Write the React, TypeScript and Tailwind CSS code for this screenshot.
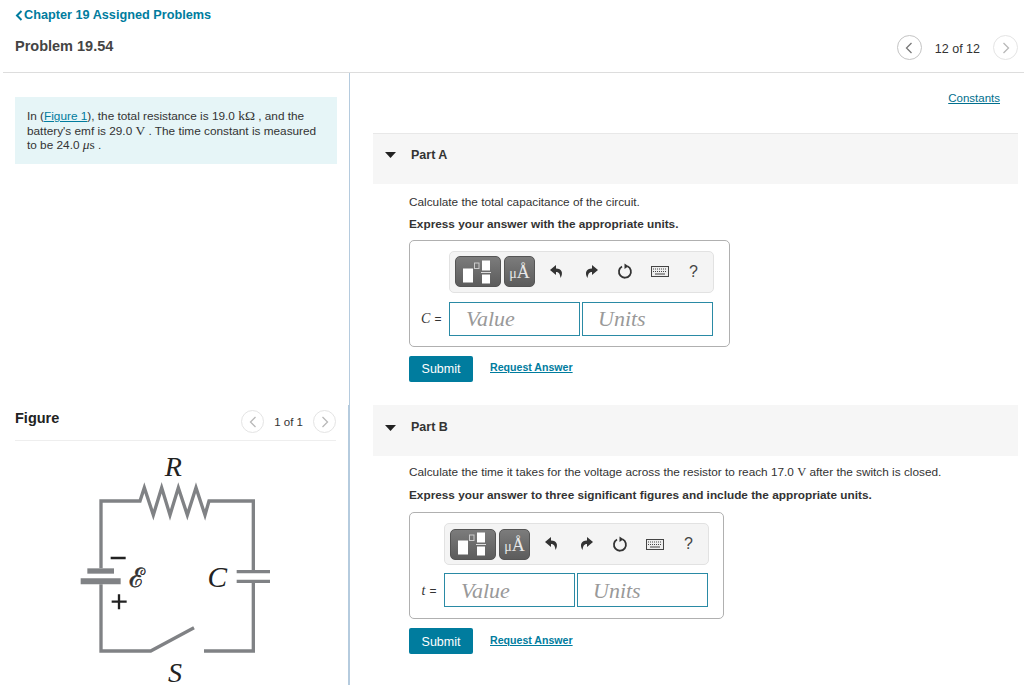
import { ReactNode } from "react";

const serif = "font-['Liberation_Serif',serif]";

function Pager({ label, small }: { label: string; small?: boolean }) {
    const size = small ? "h-[23px] w-[23px]" : "h-[25px] w-[25px]";
    const ring = small ? "border-[#e4e4e4]" : "border-[#c4c4c4]";
    const stroke = small ? "#b8b8b8" : "#777";
    return (
        <div className={small ? "flex items-center gap-[10px]" : "flex items-center gap-[13px]"}>
            <div className={`flex items-center justify-center rounded-full border ${size} ${ring}`}>
                <svg width="8" height="12" viewBox="0 0 8 12" fill="none"><path d="M6.5 1 1.5 6l5 5" stroke={stroke} strokeWidth="1.3" /></svg>
            </div>
            <span className={small ? "pt-[3px] text-[11.5px] text-[#333]" : "pt-[3px] text-[12.5px] text-[#333]"}>{label}</span>
            <div className={`flex items-center justify-center rounded-full border border-[#e4e4e4] ${size}`}>
                <svg width="8" height="12" viewBox="0 0 8 12" fill="none"><path d="M1.5 1l5 5-5 5" stroke="#b8b8b8" strokeWidth="1.3" /></svg>
            </div>
        </div>
    );
}

function Toolbar() {
    return (
        <div className="flex h-[42px] w-[265px] items-center rounded-[5px] border border-[#e2e2e2] bg-[#f4f4f4] pl-[5px]">
            <div className="flex h-[31px] w-[46px] items-center justify-center rounded-[5px] border border-[#555] bg-linear-to-b from-[#7c7c7c] to-[#5c5c5c]">
                <svg width="36" height="24" viewBox="0 0 36 24">
                    <rect x="3" y="8.5" width="10" height="14" fill="#fff" />
                    <rect x="14.5" y="3" width="4.5" height="5.5" fill="none" stroke="#ccc" />
                    <rect x="22" y="0.5" width="8" height="10" fill="#fff" />
                    <rect x="21" y="12" width="10" height="1" fill="#ddd" />
                    <rect x="22" y="14.5" width="8" height="9" fill="#fff" />
                </svg>
            </div>
            <div className={`ml-[3px] flex h-[31px] w-[31px] items-baseline justify-center rounded-[5px] border border-[#555] bg-linear-to-b from-[#7c7c7c] to-[#5c5c5c] pt-[5px] text-[#e8e8e8] ${serif}`}>
                <span className="text-[14px]">μ</span>
                <span className="text-[18px] leading-[20px]">Å</span>
            </div>
            <svg className="ml-[15px]" width="14" height="14" viewBox="0 0 14 14"><path d="M6 0 0 5l6 5V7c2.5 0 4 1.5 4.500 6 3-5 1.500-9.500-4.500-9.500z" fill="#333" /></svg>
            <svg className="ml-[20px]" width="14" height="14" viewBox="0 0 14 14"><path d="M8 0l6 5-6 5V7c-2.500 0-4 1.500-4.500 6-3-5-1.500-9.500 4.500-9.500z" fill="#333" /></svg>
            <svg className="ml-[19px]" width="16" height="17" viewBox="0 0 16 17" fill="none">
                <path d="M10.500 3.300A6 6 0 1 1 5 3.500" stroke="#333" strokeWidth="1.800" />
                <path d="M7.500 0.500 11.500 3.300 7.500 6z" fill="#333" />
            </svg>
            <svg className="ml-[18px]" width="18" height="11" viewBox="0 0 18 11">
                <rect x=".5" y=".5" width="17" height="10" fill="#eee" stroke="#444" />
                <path d="M2 3h14M2 5.500h14" stroke="#444" strokeWidth="1" strokeDasharray="1 1" />
                <path d="M4 8h10" stroke="#444" />
            </svg>
            <span className="ml-[20px] text-[16px] text-[#444]">?</span>
        </div>
    );
}

function AnswerBox({ symbol, width, shift, rowGap }: { symbol: string; width: string; shift: string; rowGap: string }) {
    return (
        <div className={`h-[107px] ${width} rounded-[5px] border border-[#b0b0b0] pt-[10px]`}>
            <div className={shift}>
                <Toolbar />
            </div>
            <div className={`relative flex items-center ${rowGap} ${shift}`}>
                <span className="absolute right-full mr-[7px] whitespace-nowrap text-[12px] tracking-[0.4px] text-[#333]">
                    <i className={`${serif} text-[14px]`}>{symbol}</i> =
                </span>
                <div className={`flex h-[34px] w-[131px] items-center border border-[#2a8aa5] pl-[16px] text-[22px] italic text-[#999] ${serif}`}>Value</div>
                <div className={`ml-[2px] flex h-[34px] w-[131px] items-center border border-[#2a8aa5] pl-[15px] text-[22px] italic text-[#999] ${serif}`}>Units</div>
            </div>
        </div>
    );
}

function Part({ title, className, headClass, children }: { title: string; className?: string; headClass: string; children: ReactNode }) {
    return (
        <section className={className}>
            <div className={`flex items-center bg-[#f6f6f6] pl-[12px] ${headClass}`}>
                <svg width="11" height="6" viewBox="0 0 11 6"><path d="M0 0h11L5.500 6z" fill="#222" /></svg>
                <span className="ml-[15px] text-[12.5px] font-bold text-[#333]">{title}</span>
            </div>
            <div className="pl-[36px]">{children}</div>
        </section>
    );
}

function Actions() {
    return (
        <div className="mt-[9px] flex items-center">
            <button className="h-[26px] w-[64px] rounded-[2px] bg-[#007c9e] pt-[1px] text-[12.5px] text-white">Submit</button>
            <a className="mb-[1px] ml-[17px] text-[10.6px] font-bold text-[#007c9e] underline">Request Answer</a>
        </div>
    );
}

function Circuit() {
    const wire = { stroke: "#808285", strokeWidth: 10, fill: "none" };
    return (
        <svg className="ml-[45px] block" width="230" height="245" viewBox="0 0 690 735">
            <path d="M123 382V180H240L253 140 280 222 305 140 330 222 355 140 382 222 408 140 435 222 447 180H580V392" {...wire} />
            <path d="M123 430V630H272L402 560M432 630H580V421" {...wire} />
            <path d="M82 390h80" stroke="#808285" strokeWidth="16" />
            <path d="M62 421h120" stroke="#808285" strokeWidth="18" />
            <path d="M530 392h100M530 421h100" stroke="#808285" strokeWidth="10" />
            <path d="M152 351h45M155 482h45M177 460v45" stroke="#222" strokeWidth="7" />
            <text x="340" y="104" textAnchor="middle" fontFamily="Liberation Serif" fontStyle="italic" fontSize="84" fill="#222">R</text>
            <text x="472" y="438" textAnchor="middle" fontFamily="Liberation Serif" fontStyle="italic" fontSize="88" fill="#222">C</text>
            <text x="345" y="722" textAnchor="middle" fontFamily="Liberation Serif" fontStyle="italic" fontSize="84" fill="#222">S</text>
            <text x="230" y="438" textAnchor="middle" fontFamily="DejaVu Serif" fontSize="80" fill="#333" stroke="#333" strokeWidth="1.5">ℰ</text>
        </svg>
    );
}

export default function App() {
    return (
        <div className="h-[685px] w-[1024px] overflow-hidden bg-white font-['Liberation_Sans',sans-serif]">
            <header className="ml-[3px] flex h-[73px] items-start justify-between border-b border-[#dddddd] pl-[12px] pr-[6px]">
                <div>
                    <a className="mt-[6px] flex items-center text-[12.7px] font-bold text-[#007c9e]">
                        <svg className="mr-[1px]" width="8" height="11" viewBox="0 0 8 11" fill="none"><path d="M6.500 1 2 5.500 6.500 10" stroke="#007c9e" strokeWidth="2" /></svg>
                        Chapter 19 Assigned Problems
                    </a>
                    <h1 className="mt-[11px] text-[14.5px] font-bold text-[#444]">Problem 19.54</h1>
                </div>
                <div className="mt-[35px]">
                    <Pager label="12 of 12" />
                </div>
            </header>

            <div className="flex h-[612px]">
                <aside className="w-[350px] shrink-0">
                    <div className="h-[332px] border-r border-[#b5cbde] pl-[15px] pr-[12px] pt-[24px]">
                        <div className="h-[67px] w-[322px] bg-[#e6f5f7] px-[12px] pt-[12px] text-[11.8px] leading-[14.5px] text-[#333]">
                            In (<a className="text-[#007c9e] underline">Figure 1</a>), the total resistance is 19.0 <span className={`${serif} text-[13.5px]`}>kΩ</span> , and the battery's emf is 29.0 <span className={`${serif} text-[13.5px]`}>V</span> . The time constant is measured to be 24.0 <span className={`${serif} text-[13.5px]`}><i>μ</i>s</span> .
                        </div>
                    </div>
                    <div className="h-[280px] border-r-2 border-[#b5cbde] pl-[15px] pr-[12px]">
                        <div className="flex h-[36px] w-[321px] items-center justify-between border-b border-[#eeeeee] pb-[2px]">
                            <h2 className="mb-[5px] text-[14.5px] font-bold text-[#222]">Figure</h2>
                            <Pager label="1 of 1" small />
                        </div>
                        <Circuit />
                    </div>
                </aside>

                <main className="w-[645px] pl-[23px]">
                    <div className="flex h-[60px] w-[628px] justify-end pr-[1px] pt-[17px]">
                        <a className="text-[11.5px] text-[#006f8e] underline">Constants</a>
                    </div>
                    <div className="w-[645px] border-t border-[#e8e8e8]">
                        <Part title="Part A" headClass="h-[50px] pb-[8px]">
                            <p className="mt-[10px] text-[11.8px] text-[#333]">Calculate the total capacitance of the circuit.</p>
                            <p className="mb-[6px] mt-[2px] text-[11.8px] leading-[20px] font-bold text-[#333]">Express your answer with the appropriate units.</p>
                            <AnswerBox symbol="C" width="w-[321px]" shift="ml-[39px]" rowGap="mt-[9px]" />
                            <Actions />
                        </Part>
                        <Part title="Part B" className="mt-[23px]" headClass="h-[51px] pb-[5px]">
                            <p className="mt-[7px] text-[11.8px] text-[#333]">
                                Calculate the time it takes for the voltage across the resistor to reach 17.0 <span className={`${serif} text-[12.5px]`}>V</span> after the switch is closed.
                            </p>
                            <p className="mb-[7px] mt-[4px] text-[11.8px] leading-[20px] font-bold text-[#333]">Express your answer to three significant figures and include the appropriate units.</p>
                            <AnswerBox symbol="t" width="w-[315px]" shift="ml-[34px]" rowGap="mt-[8px]" />
                            <Actions />
                        </Part>
                    </div>
                </main>
            </div>
        </div>
    );
}
